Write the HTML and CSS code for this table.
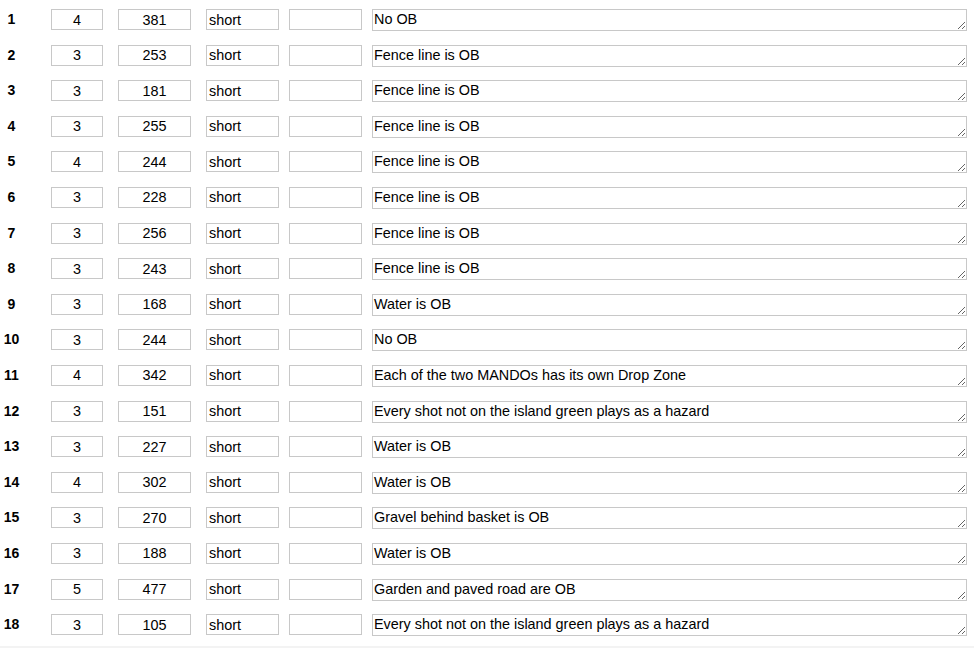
FILE: index.html
```html
<!DOCTYPE html>
<html>
<head>
<meta charset="utf-8">
<link rel="stylesheet" href="styles.css">
</head>
<body>
<div class="sheet">
  <div class="row"><span class="num">1</span><input class="f par" value="4"><input class="f len" value="381"><input class="f tee" value="short"><input class="f ext" value=""><textarea class="note">No OB</textarea></div>
  <div class="row"><span class="num">2</span><input class="f par" value="3"><input class="f len" value="253"><input class="f tee" value="short"><input class="f ext" value=""><textarea class="note">Fence line is OB</textarea></div>
  <div class="row"><span class="num">3</span><input class="f par" value="3"><input class="f len" value="181"><input class="f tee" value="short"><input class="f ext" value=""><textarea class="note">Fence line is OB</textarea></div>
  <div class="row"><span class="num">4</span><input class="f par" value="3"><input class="f len" value="255"><input class="f tee" value="short"><input class="f ext" value=""><textarea class="note">Fence line is OB</textarea></div>
  <div class="row"><span class="num">5</span><input class="f par" value="4"><input class="f len" value="244"><input class="f tee" value="short"><input class="f ext" value=""><textarea class="note">Fence line is OB</textarea></div>
  <div class="row"><span class="num">6</span><input class="f par" value="3"><input class="f len" value="228"><input class="f tee" value="short"><input class="f ext" value=""><textarea class="note">Fence line is OB</textarea></div>
  <div class="row"><span class="num">7</span><input class="f par" value="3"><input class="f len" value="256"><input class="f tee" value="short"><input class="f ext" value=""><textarea class="note">Fence line is OB</textarea></div>
  <div class="row"><span class="num">8</span><input class="f par" value="3"><input class="f len" value="243"><input class="f tee" value="short"><input class="f ext" value=""><textarea class="note">Fence line is OB</textarea></div>
  <div class="row"><span class="num">9</span><input class="f par" value="3"><input class="f len" value="168"><input class="f tee" value="short"><input class="f ext" value=""><textarea class="note">Water is OB</textarea></div>
  <div class="row"><span class="num">10</span><input class="f par" value="3"><input class="f len" value="244"><input class="f tee" value="short"><input class="f ext" value=""><textarea class="note">No OB</textarea></div>
  <div class="row"><span class="num">11</span><input class="f par" value="4"><input class="f len" value="342"><input class="f tee" value="short"><input class="f ext" value=""><textarea class="note">Each of the two MANDOs has its own Drop Zone</textarea></div>
  <div class="row"><span class="num">12</span><input class="f par" value="3"><input class="f len" value="151"><input class="f tee" value="short"><input class="f ext" value=""><textarea class="note">Every shot not on the island green plays as a hazard</textarea></div>
  <div class="row"><span class="num">13</span><input class="f par" value="3"><input class="f len" value="227"><input class="f tee" value="short"><input class="f ext" value=""><textarea class="note">Water is OB</textarea></div>
  <div class="row"><span class="num">14</span><input class="f par" value="4"><input class="f len" value="302"><input class="f tee" value="short"><input class="f ext" value=""><textarea class="note">Water is OB</textarea></div>
  <div class="row"><span class="num">15</span><input class="f par" value="3"><input class="f len" value="270"><input class="f tee" value="short"><input class="f ext" value=""><textarea class="note">Gravel behind basket is OB</textarea></div>
  <div class="row"><span class="num">16</span><input class="f par" value="3"><input class="f len" value="188"><input class="f tee" value="short"><input class="f ext" value=""><textarea class="note">Water is OB</textarea></div>
  <div class="row"><span class="num">17</span><input class="f par" value="5"><input class="f len" value="477"><input class="f tee" value="short"><input class="f ext" value=""><textarea class="note">Garden and paved road are OB</textarea></div>
  <div class="row"><span class="num">18</span><input class="f par" value="3"><input class="f len" value="105"><input class="f tee" value="short"><input class="f ext" value=""><textarea class="note">Every shot not on the island green plays as a hazard</textarea></div>
</div>
</body>
</html>
```

FILE: styles.css
```css
html, body {
  margin: 0;
  padding: 0;
  background: #f3f3f3;
  overflow: hidden;
}
.sheet {
  background: #ffffff;
  height: 646px;
  box-sizing: border-box;
  padding-top: 9px;
  font-family: "Liberation Sans", Arial, sans-serif;
}
.row {
  display: flex;
  align-items: flex-start;
  height: 35.6px;
}
.num {
  width: 23px;
  height: 21px;
  line-height: 20px;
  text-align: center;
  font-weight: bold;
  font-size: 14px;
  color: #000;
}
.f, .note {
  box-sizing: border-box;
  border: 1px solid #c8c8c8;
  border-radius: 0;
  font-family: "Liberation Sans", Arial, sans-serif;
  font-size: 14.4px;
  color: #000;
  background: #fff;
  outline: none;
  margin: 0;
}
.f {
  height: 21px;
  padding: 0 2px;
}
.par {
  width: 52px;
  margin-left: 28px;
  text-align: center;
}
.len {
  width: 73px;
  margin-left: 15px;
  text-align: center;
}
.tee {
  width: 73px;
  margin-left: 15px;
  text-align: left;
}
.ext {
  width: 73px;
  margin-left: 10px;
}
.note {
  width: 595px;
  height: 22px;
  margin-left: 10px;
  padding: 0 1px;
  overflow: hidden;
  resize: both;
  line-height: 18.5px;
}
```
